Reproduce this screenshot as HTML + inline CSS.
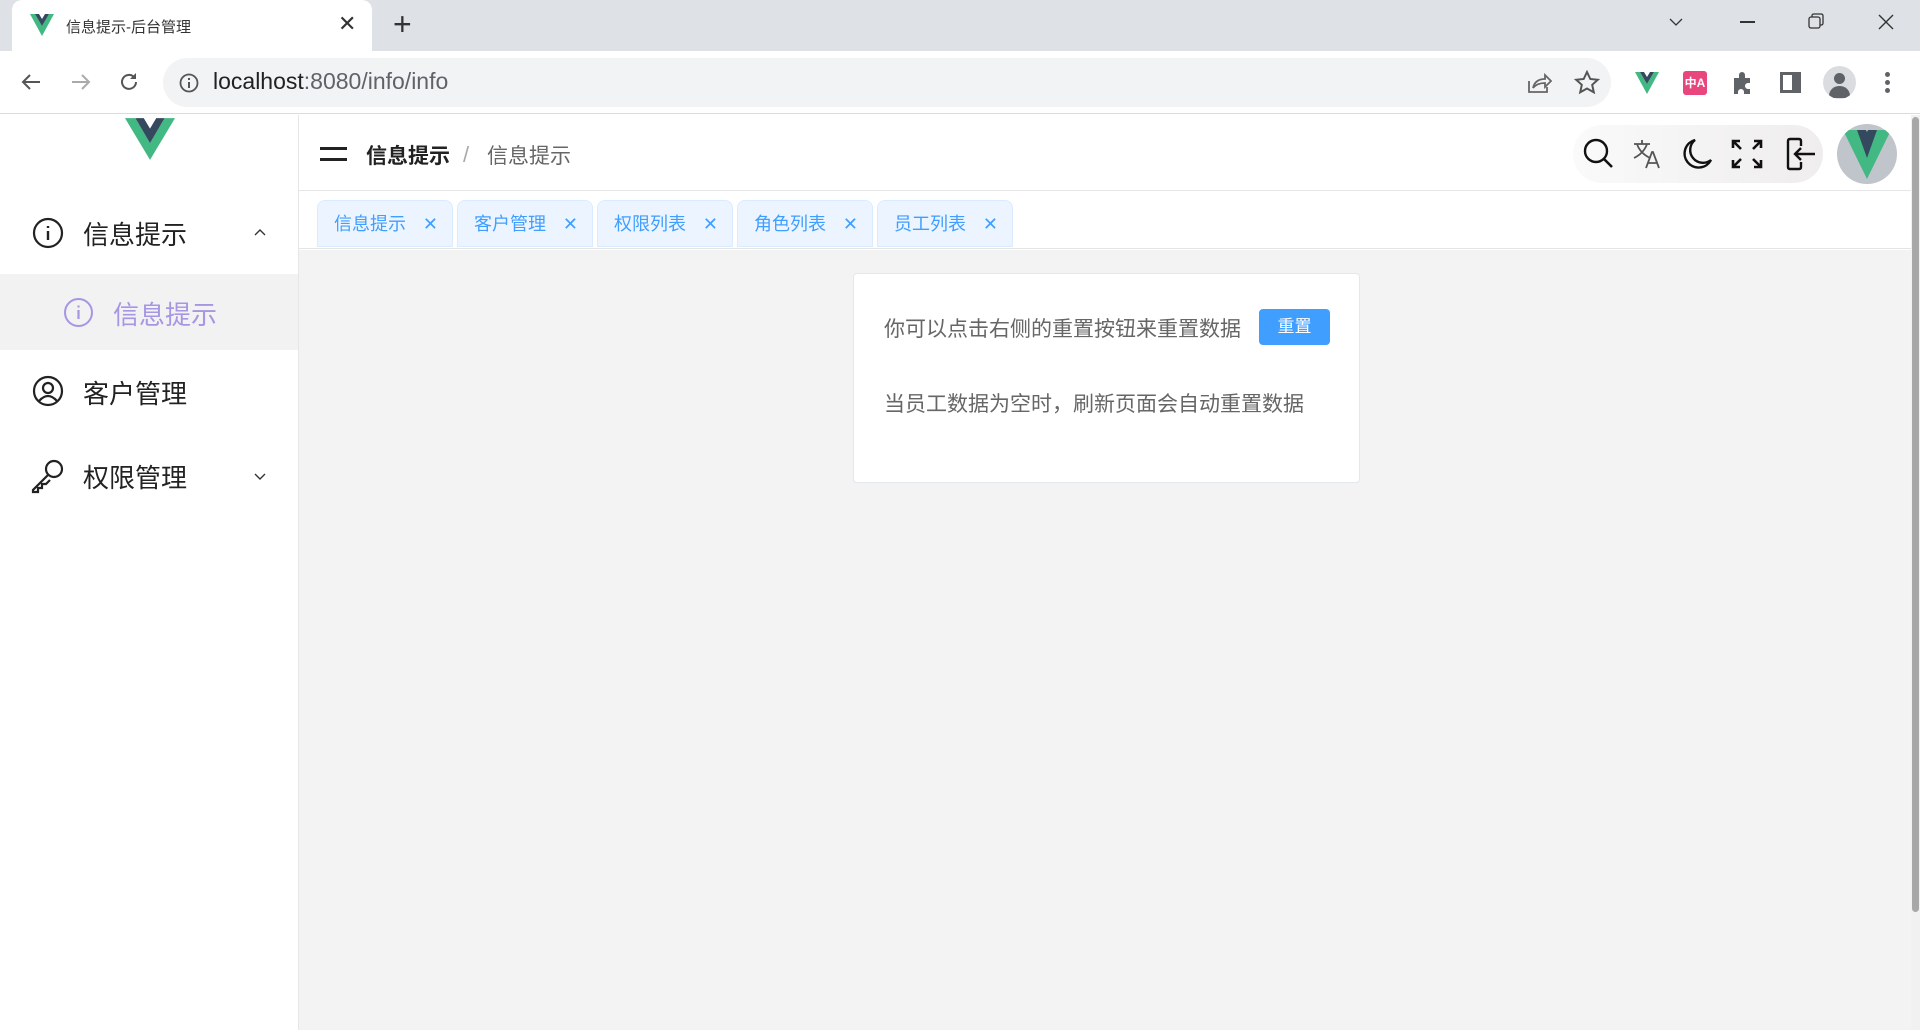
<!DOCTYPE html>
<html><head><meta charset="utf-8"><style>
*{margin:0;padding:0;box-sizing:border-box}
body{width:1920px;height:1030px;overflow:hidden;font-family:"Liberation Sans","Noto Sans CJK SC",sans-serif;background:#fff;position:relative}
.a{position:absolute}
.cn{font-family:"Liberation Sans","Noto Sans CJK SC",sans-serif}
</style></head><body>
<div class="a" style="left:0;top:0;width:1920px;height:51px;background:#dee1e6"></div>
<div class="a" style="left:12px;top:0;width:360px;height:51px;background:#fff;border-radius:10px 10px 0 0"></div>
<svg class="a" style="left:30px;top:14px" width="24" height="22" viewBox="0 0 24 22"><path d="M0 0h5l7 12 7-12h5L12 22z" fill="#42b883"/><path d="M5 0h4l3 5 3-5h4l-7 12z" fill="#35495e"/></svg>
<div class="a cn" style="left:66px;top:16px;font-size:15px;color:#333">信息提示-后台管理</div>
<div class="a" style="left:338px;top:11px;font-size:22px;color:#333">✕</div>
<div class="a" style="left:393px;top:6px;font-size:32px;color:#333;font-weight:300">+</div>
<svg class="a" style="left:1668px;top:14px" width="16" height="16"><path d="M2 5l6 6 6-6" stroke="#333" fill="none" stroke-width="1.3"/></svg>
<div class="a" style="left:1740px;top:21px;width:15px;height:1.5px;background:#333"></div>
<svg class="a" style="left:1808px;top:13px" width="16" height="16"><rect x="1" y="4" width="11" height="11" rx="2" fill="none" stroke="#333" stroke-width="1.3"/><path d="M4 4V2.5Q4 1 6 1h7q2 0 2 2v7q0 2-2 2h-1" fill="none" stroke="#333" stroke-width="1.3"/></svg>
<svg class="a" style="left:1877px;top:13px" width="18" height="18"><path d="M2 2l14 14M16 2L2 16" stroke="#333" stroke-width="1.4"/></svg>
<div class="a" style="left:0;top:51px;width:1920px;height:63px;background:#fff;border-bottom:1px solid #dadce0"></div>
<svg class="a" style="left:20px;top:71px" width="22" height="22"><path d="M20 11H3M10 4l-7 7 7 7" stroke="#555" stroke-width="2" fill="none"/></svg>
<svg class="a" style="left:70px;top:71px" width="22" height="22"><path d="M2 11h17M12 4l7 7-7 7" stroke="#aaa" stroke-width="2" fill="none"/></svg>
<svg class="a" style="left:117px;top:70px" width="24" height="24"><path d="M19 12a7 7 0 1 1-2-5" stroke="#555" stroke-width="2" fill="none"/><path d="M19 3v6h-6z" fill="#555"/></svg>
<div class="a" style="left:163px;top:58px;width:1448px;height:49px;background:#f1f3f4;border-radius:25px"></div>
<svg class="a" style="left:178px;top:72px" width="22" height="22"><circle cx="11" cy="11" r="8.5" stroke="#555" stroke-width="1.8" fill="none"/><path d="M11 10v6M11 6v2" stroke="#555" stroke-width="2"/></svg>
<div class="a" style="left:213px;top:68px;font-size:23px;color:#202124">localhost<span style="color:#5f6368">:8080/info/info</span></div>
<svg class="a" style="left:1526px;top:71px" width="26" height="24"><path d="M3 10v11h18v-5" stroke="#666" stroke-width="1.8" fill="none"/><path d="M7 17q2-9 12-9V4l6 6-6 6v-4q-8 0-12 5z" stroke="#666" stroke-width="1.8" fill="none"/></svg>
<svg class="a" style="left:1574px;top:70px" width="26" height="26"><path d="M13 2l3.3 7 7.5.8-5.6 5 1.6 7.5L13 18.5 6.2 22.3l1.6-7.5-5.6-5 7.5-.8z" stroke="#555" stroke-width="2" fill="none"/></svg>
<svg class="a" style="left:1634px;top:72px" width="26" height="22" viewBox="0 0 24 22"><path d="M0 0h5l7 12 7-12h5L12 22z" fill="#42b883"/><path d="M5 0h4l3 5 3-5h4l-7 12z" fill="#35495e"/></svg>
<div class="a cn" style="left:1683px;top:71px;width:24px;height:24px;background:#e8467c;border-radius:3px;color:#fff;font-size:12px;line-height:24px;text-align:center;font-weight:bold">中A</div>
<svg class="a" style="left:1730px;top:70px" width="26" height="26"><path d="M4 8h5V5a3 3 0 0 1 6 0v3h5v5h-2a3 3 0 0 0 0 6h2v5h-6v-2a3 3 0 0 0-6 0v2H4z" fill="#5f6368"/></svg>
<div class="a" style="left:1780px;top:72px;width:21px;height:21px;border:3px solid #5f6368;border-right-width:9px"></div>
<div class="a" style="left:1823px;top:66px;width:33px;height:33px;border-radius:50%;background:#dadce0;overflow:hidden"><div class="a" style="left:11px;top:7px;width:11px;height:11px;border-radius:50%;background:#5f6368"></div><div class="a" style="left:6px;top:20px;width:21px;height:12px;border-radius:10px 10px 0 0;background:#5f6368"></div></div>
<div class="a" style="left:1885px;top:72px;width:5px;height:5px;border-radius:50%;background:#5f6368;box-shadow:0 8px 0 #5f6368,0 16px 0 #5f6368"></div>
<div class="a" style="left:0;top:115px;width:299px;height:915px;background:#fff;border-right:1px solid #e6e6e6"></div>
<svg class="a" style="left:125px;top:118px" width="50" height="42" viewBox="0 0 24 20"><path d="M0 0h5l7 12 7-12h5L12 20z" fill="#42b883"/><path d="M5 0h4l3 5 3-5h4l-7 12z" fill="#35495e"/></svg>
<svg class="a" style="left:32px;top:217px" width="32" height="32"><circle cx="16" cy="16" r="14" stroke="#222" stroke-width="2.2" fill="none"/><path d="M16 14v9M16 9v2" stroke="#222" stroke-width="2.4"/></svg>
<div class="a cn" style="left:83px;top:215px;font-size:26px;color:#222">信息提示</div>
<svg class="a" style="left:253px;top:226px" width="14" height="14"><path d="M2 9l5-5 5 5" stroke="#333" fill="none" stroke-width="1.4"/></svg>
<div class="a" style="left:0;top:274px;width:298px;height:76px;background:#f2f2f2"></div>
<svg class="a" style="left:63px;top:297px" width="31" height="31"><circle cx="15.5" cy="15.5" r="13.5" stroke="#a796e3" stroke-width="2" fill="none"/><path d="M15.5 13v9M15.5 8.5v2" stroke="#a796e3" stroke-width="2.2"/></svg>
<div class="a cn" style="left:113px;top:295px;font-size:26px;color:#a796e3">信息提示</div>
<svg class="a" style="left:32px;top:375px" width="32" height="32"><circle cx="16" cy="16" r="14" stroke="#222" stroke-width="2.2" fill="none"/><circle cx="16" cy="13" r="5" stroke="#222" stroke-width="2.2" fill="none"/><path d="M7 26q9-10 18 0" stroke="#222" stroke-width="2.2" fill="none"/></svg>
<div class="a cn" style="left:83px;top:374px;font-size:26px;color:#222">客户管理</div>
<svg class="a" style="left:30px;top:458px" width="36" height="36"><circle cx="24" cy="11" r="8" stroke="#222" stroke-width="2.2" fill="none"/><path d="M18 17L3 32v2h5v-4h4v-4h4l4-4" stroke="#222" stroke-width="2.2" fill="none"/></svg>
<div class="a cn" style="left:83px;top:458px;font-size:26px;color:#222">权限管理</div>
<svg class="a" style="left:253px;top:469px" width="14" height="14"><path d="M2 5l5 5 5-5" stroke="#333" fill="none" stroke-width="1.4"/></svg>
<div class="a" style="left:299px;top:115px;width:1612px;height:76px;background:#fff;border-bottom:1px solid #e6e6e6"></div>
<div class="a" style="left:320px;top:147px;width:27px;height:3px;background:#222;box-shadow:0 11px 0 #222"></div>
<div class="a cn" style="left:366px;top:140px;font-size:21px;color:#222;font-weight:bold">信息提示</div>
<div class="a" style="left:463px;top:142px;font-size:22px;color:#aaa">/</div>
<div class="a cn" style="left:487px;top:140px;font-size:21px;color:#666">信息提示</div>
<div class="a" style="left:1573px;top:125px;width:250px;height:58px;border-radius:29px;background:linear-gradient(90deg,#fafafa,#efeded)"></div>
<svg class="a" style="left:1582px;top:137px" width="32" height="34"><circle cx="14" cy="14" r="11" stroke="#111" stroke-width="2.4" fill="none"/><path d="M22 22l8 8" stroke="#111" stroke-width="2.6"/></svg>
<svg class="a" style="left:1633px;top:139px" width="28" height="30"><path d="M1 5h16M9 1v4M4 5q3 9 13 14M14 5q-3 9-13 14" stroke="#555" stroke-width="1.8" fill="none"/><path d="M13 29l6-16h1l6 16M15 24h9" stroke="#555" stroke-width="1.8" fill="none"/></svg>
<svg class="a" style="left:1681px;top:137px" width="32" height="34"><path d="M14 3a14 14 0 1 0 16 20A12 12 0 0 1 14 3z" stroke="#111" stroke-width="2.4" fill="none"/></svg>
<svg class="a" style="left:1731px;top:139px" width="32" height="30"><path d="M2 9V2h7M2 2l8 8M30 9V2h-7M30 2l-8 8M2 21v7h7M2 28l8-8M30 21v7h-7M30 28l-8-8" stroke="#111" stroke-width="2.6" fill="none"/></svg>
<svg class="a" style="left:1785px;top:137px" width="32" height="34"><path d="M16 9V4q0-2-2-2H5q-2 0-2 2v26q0 2 2 2h9q2 0 2-2v-5" stroke="#111" stroke-width="2.4" fill="none"/><path d="M30 17H10M16 11l-6 6 6 6" stroke="#111" stroke-width="2.4" fill="none"/></svg>
<div class="a" style="left:1837px;top:124px;width:60px;height:60px;border-radius:50%;background:#c0c4cb;overflow:hidden"><svg width="60" height="60" viewBox="0 0 60 60"><path d="M6 6h14l10 18 10-18h14L30 55z" fill="#42b883"/><path d="M20 6h9l1 2 1-2h9L30 34z" fill="#35495e"/></svg></div>
<div class="a" style="left:299px;top:191px;width:1612px;height:58px;background:#fff;border-bottom:1px solid #e4e4e4"></div>
<div class="a cn" style="left:317px;top:200px;width:136px;height:47px;background:#ecf5ff;border:1px solid #d9ecff;border-radius:8px 8px 0 0;color:#409eff;font-size:18px;line-height:47px;padding-left:16px">信息提示<span style="position:absolute;right:14px;font-size:18px">✕</span></div>
<div class="a cn" style="left:457px;top:200px;width:136px;height:47px;background:#ecf5ff;border:1px solid #d9ecff;border-radius:8px 8px 0 0;color:#409eff;font-size:18px;line-height:47px;padding-left:16px">客户管理<span style="position:absolute;right:14px;font-size:18px">✕</span></div>
<div class="a cn" style="left:597px;top:200px;width:136px;height:47px;background:#ecf5ff;border:1px solid #d9ecff;border-radius:8px 8px 0 0;color:#409eff;font-size:18px;line-height:47px;padding-left:16px">权限列表<span style="position:absolute;right:14px;font-size:18px">✕</span></div>
<div class="a cn" style="left:737px;top:200px;width:136px;height:47px;background:#ecf5ff;border:1px solid #d9ecff;border-radius:8px 8px 0 0;color:#409eff;font-size:18px;line-height:47px;padding-left:16px">角色列表<span style="position:absolute;right:14px;font-size:18px">✕</span></div>
<div class="a cn" style="left:877px;top:200px;width:136px;height:47px;background:#ecf5ff;border:1px solid #d9ecff;border-radius:8px 8px 0 0;color:#409eff;font-size:18px;line-height:47px;padding-left:16px">员工列表<span style="position:absolute;right:14px;font-size:18px">✕</span></div>
<div class="a" style="left:299px;top:250px;width:1612px;height:780px;background:#f3f3f3"></div>
<div class="a" style="left:853px;top:273px;width:507px;height:210px;background:#fff;border:1px solid #e4e7ed;border-radius:4px"></div>
<div class="a cn" style="left:884px;top:313px;font-size:21px;color:#666">你可以点击右侧的重置按钮来重置数据</div>
<div class="a cn" style="left:1259px;top:309px;width:71px;height:36px;background:#409eff;border-radius:4px;color:#fff;font-size:17px;line-height:36px;text-align:center">重置</div>
<div class="a cn" style="left:884px;top:388px;font-size:21px;color:#666">当员工数据为空时，刷新页面会自动重置数据</div>
<div class="a" style="left:1911px;top:115px;width:9px;height:915px;background:#f1f1f1"></div>
<div class="a" style="left:1912px;top:117px;width:7px;height:795px;background:#a8a8a8;border-radius:4px"></div>
</body></html>
